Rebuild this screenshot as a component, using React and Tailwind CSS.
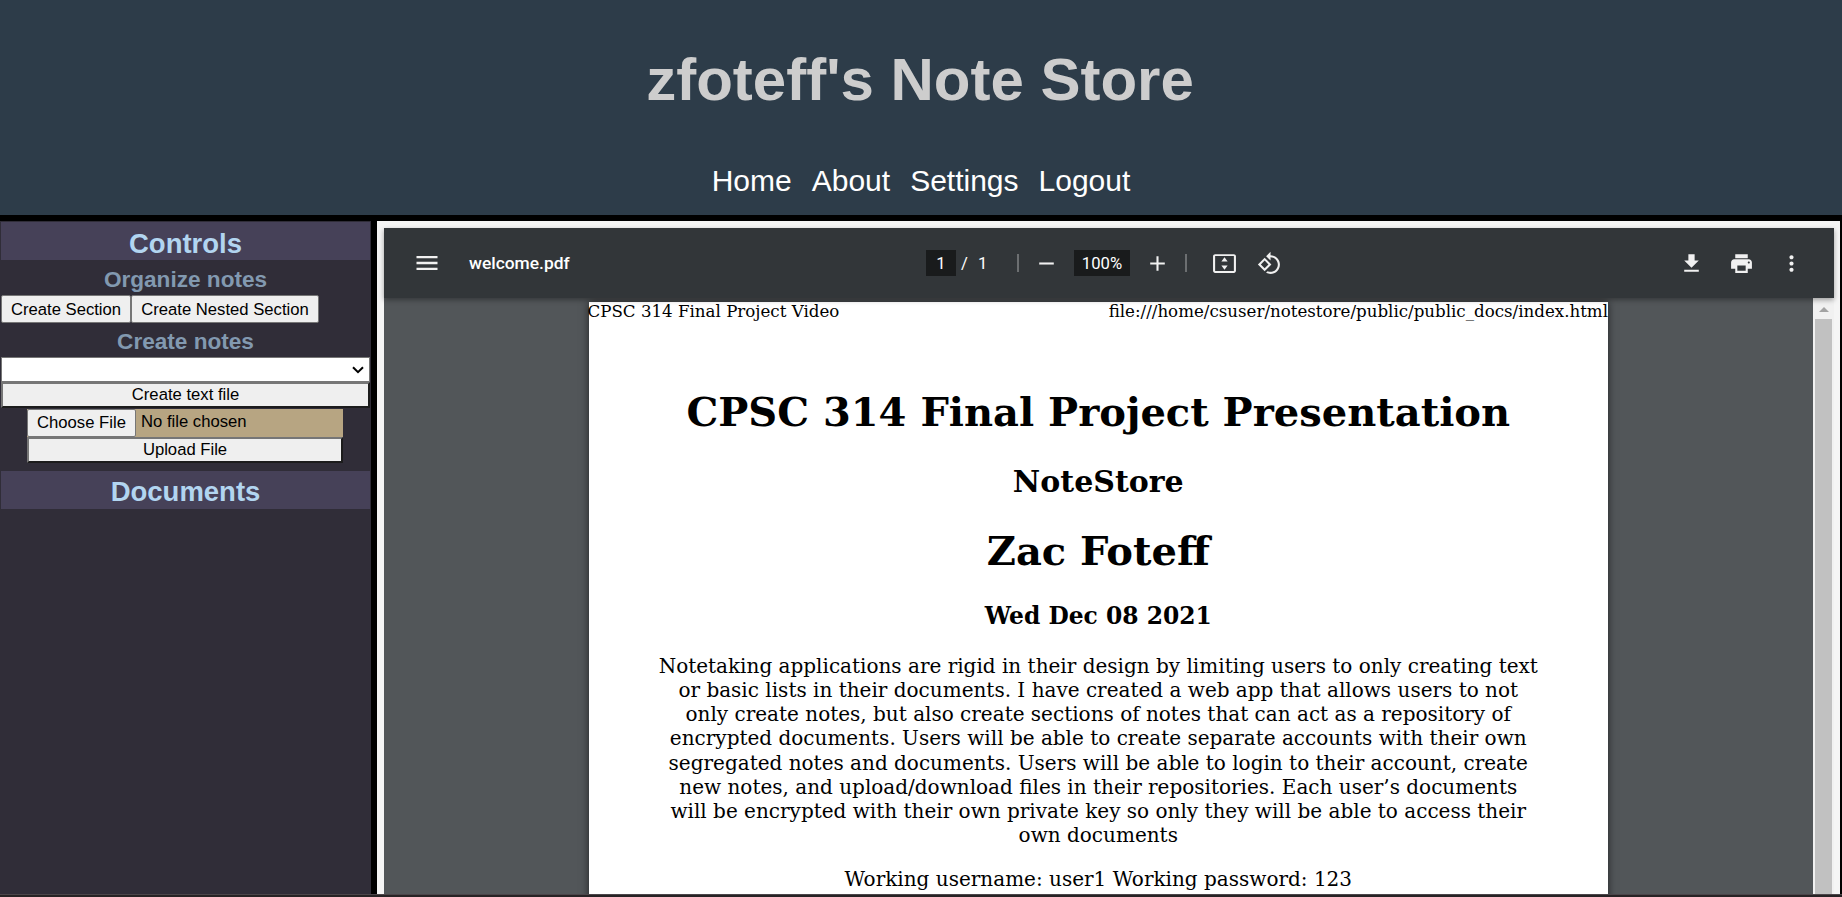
const Icon = ({ d, className = "size-[25px]" }) => (
  <svg viewBox="0 0 24 24" className={"shrink-0 fill-[#f1f1f1] " + className}>
    <path d={d} />
  </svg>
);

const paragraph = [
  "Notetaking applications are rigid in their design by limiting users to only creating text",
  "or basic lists in their documents. I have created a web app that allows users to not",
  "only create notes, but also create sections of notes that can act as a repository of",
  "encrypted documents. Users will be able to create separate accounts with their own",
  "segregated notes and documents. Users will be able to login to their account, create",
  "new notes, and upload/download files in their repositories. Each user’s documents",
  "will be encrypted with their own private key so only they will be able to access their",
  "own documents",
];

function Sidebar() {
  return (
    <aside className="h-full w-[371px] shrink-0 bg-[#302d38] px-px pt-px text-[16.67px]">
      <h2 className="h-[38px] bg-[#464158] pt-[6px] text-center text-[27.5px] leading-[32px] font-bold text-[#b2d5f0]">Controls</h2>
      <h3 className="h-[35px] pt-[6px] text-center text-[22.6px] leading-[27px] font-bold text-[#8299b0]">Organize notes</h3>
      <div className="flex">
        <button className="h-[28px] w-[130px] rounded-[2px] border border-[#767676] bg-[#efefef] leading-[25px] text-black">Create Section</button>
        <button className="h-[28px] w-[188px] rounded-[2px] border border-[#767676] bg-[#efefef] leading-[25px] text-black">Create Nested Section</button>
      </div>
      <h3 className="h-[34px] pt-[5px] text-center text-[22.6px] leading-[27px] font-bold text-[#8299b0]">Create notes</h3>
      <div className="flex h-[25px] items-center justify-end border border-[#767676] bg-white pr-[5px]">
        <svg viewBox="0 0 12 8" className="h-[8px] w-[12px] fill-none stroke-black stroke-2"><path d="M1 1.2 6 6.2 11 1.2" /></svg>
      </div>
      <button className="block h-[26px] w-full border-2 border-t-[#767676] border-r-[#1c1c1c] border-b-[#1c1c1c] border-l-[#767676] bg-[#efefef] leading-[20px] text-black">Create text file</button>
      <div className="ml-[26px] w-[316px]">
        <div className="mt-px flex h-[28px] bg-[#b7a582] text-black">
          <span className="w-[109px] rounded-[2px] border border-[#767676] bg-[#efefef] text-center leading-[25px]">Choose File</span>
          <span className="pl-[5px] leading-[26px]">No file chosen</span>
        </div>
        <button className="block h-[26px] w-full border-2 border-t-[#767676] border-r-[#1c1c1c] border-b-[#1c1c1c] border-l-[#767676] bg-[#efefef] leading-[20px] text-black">Upload File</button>
      </div>
      <h2 className="mt-[8px] h-[38px] bg-[#464158] pt-[5px] text-center text-[27.5px] leading-[32px] font-bold text-[#b2d5f0]">Documents</h2>
    </aside>
  );
}

function Toolbar() {
  return (
    <div className="z-10 flex h-[70px] shrink-0 items-center bg-[#323639] font-['Roboto',sans-serif] text-[16.67px] text-white shadow-[0_2px_5px_rgba(0,0,0,0.35)]">
      <Icon className="ml-[29px] size-[28px]" d="M3 18h18v-2H3v2zm0-5h18v-2H3v2zm0-7v2h18V6H3z" />
      <span className="ml-[28px] w-[457px] pt-px text-[17.4px] font-medium">welcome.pdf</span>
      <span className="flex h-[26px] w-[30px] items-center justify-center bg-[#191b1c]">1</span>
      <span className="ml-[5px] w-[7px]">/</span>
      <span className="ml-[10px] w-[9px]">1</span>
      <span className="ml-[30px] h-[18px] w-[2px] bg-[#6c6f71]" />
      <Icon className="ml-[15px] size-[25px]" d="M19 13H5v-2h14v2z" />
      <span className="ml-[15px] flex h-[26px] w-[56px] items-center justify-center bg-[#191b1c]">100%</span>
      <Icon className="ml-[15px] size-[25px]" d="M19 13h-6v6h-2v-6H5v-2h6V5h2v6h6v2z" />
      <span className="ml-[15px] h-[18px] w-[2px] bg-[#6c6f71]" />
      <Icon className="ml-[25px] size-[25px]" d="M21 3H3c-1.100 0-2 .9-2 2v14c0 1.100.9 2 2 2h18c1.100 0 2-.9 2-2V5c0-1.100-.9-2-2-2zm0 16.100H3V4.900h18v14.200zM9 10h6l-3-4zM9 14h6l-3 4z" />
      <Icon className="ml-[20px] size-[25px]" d="M7.340 6.410.860 12.900l6.490 6.480 6.490-6.480-6.500-6.490zM3.690 12.900l3.660-3.660L11 12.900l-3.660 3.660-3.650-3.660zM19.360 6.640C17.610 4.880 15.300 4 13 4V.760L8.760 5 13 9.240V6c1.790 0 3.580.680 4.950 2.050 2.730 2.730 2.730 7.170 0 9.900C16.580 19.320 14.790 20 13 20c-.970 0-1.940-.210-2.840-.610l-1.490 1.490C10.020 21.620 11.510 22 13 22c2.300 0 4.610-.880 6.360-2.640 3.520-3.510 3.520-9.210 0-12.720z" />
      <div className="ml-auto flex gap-[25px] pr-[30px]">
        <Icon d="M19 9h-4V3H9v6H5l7 7 7-7zM5 18v2h14v-2H5z" />
        <Icon d="M19 8H5c-1.660 0-3 1.340-3 3v6h4v4h12v-4h4v-6c0-1.660-1.340-3-3-3zm-3 11H8v-5h8v5zm3-7c-.550 0-1-.450-1-1s.450-1 1-1 1 .450 1 1-.450 1-1 1zm-1-9H6v4h12V3z" />
        <Icon d="M12 8c1.100 0 2-.9 2-2s-.9-2-2-2-2 .9-2 2 .9 2 2 2zm0 2c-1.100 0-2 .9-2 2s.9 2 2 2 2-.9 2-2-.9-2-2-2zm0 6c-1.100 0-2 .9-2 2s.9 2 2 2 2-.9 2-2-.9-2-2-2z" />
      </div>
    </div>
  );
}

function DocumentPage() {
  return (
    <article className="mt-[4px] ml-[204.5px] h-[620px] w-[1019.5px] shrink-0 bg-white text-center font-['DejaVu_Serif',serif] whitespace-nowrap text-black shadow-[0_0_8px_rgba(0,0,0,0.6)]">
      <div className="flex h-[19px] justify-between text-[16.67px] leading-[19px]">
        <span className="-ml-px">CPSC 314 Final Project Video</span>
        <span>file:///home/csuser/notestore/public/public_docs/index.html</span>
      </div>
      <h1 className="mt-[67px] text-[40px] leading-[48px] font-bold">CPSC 314 Final Project Presentation</h1>
      <h2 className="mt-[28px] text-[30px] leading-[36px] font-bold">NoteStore</h2>
      <h1 className="mt-[27px] text-[40px] leading-[48px] font-bold">Zac Foteff</h1>
      <h3 className="mt-[27px] text-[23.4px] leading-[28px] font-bold">Wed Dec 08 2021</h3>
      <div className="mt-[24px] text-[20px] leading-[24.15px]">
        {paragraph.map((line) => <div key={line}>{line}</div>)}
        <p className="mt-[20px]">Working username: user1 Working password: 123</p>
      </div>
    </article>
  );
}

export default function App() {
  return (
    <div className="flex h-[897px] w-[1842px] flex-col overflow-hidden bg-black font-['Liberation_Sans',Arial,sans-serif]">
      <header className="h-[215px] shrink-0 bg-[#2d3c49] pt-[45px] text-center">
        <h1 className="pr-[2px] text-[60px] leading-[69px] font-bold text-[#cdcdcd]">zfoteff's Note Store</h1>
        <nav className="mt-[50px] flex justify-center gap-[20px] text-[30px] leading-[34px] text-white">
          <a>Home</a><a>About</a><a>Settings</a><a>Logout</a>
        </nav>
      </header>
      <div className="mt-[6px] flex h-[673px] shrink-0">
        <Sidebar />
        <main className="ml-[6px] flex w-[1463px] flex-col bg-[#f5f5f5] pt-[7px] pr-[6px] pl-[7px]">
          <Toolbar />
          <div className="flex h-[596px] overflow-hidden bg-[#525659]">
            <DocumentPage />
            <div className="ml-auto flex w-[21px] flex-col items-center bg-[#f1f1f1]">
              <svg viewBox="0 0 10 5" className="mt-[9px] mb-[7px] h-[5px] w-[10px] shrink-0 fill-[#a3a3a3]"><path d="M0 5 5 0l5 5z" /></svg>
              <div className="w-[17px] flex-1 bg-[#c1c1c1]" />
            </div>
          </div>
        </main>
      </div>
      <footer className="h-[3px] shrink-0 border-t border-[#4c464a] bg-[#272325]" />
    </div>
  );
}
